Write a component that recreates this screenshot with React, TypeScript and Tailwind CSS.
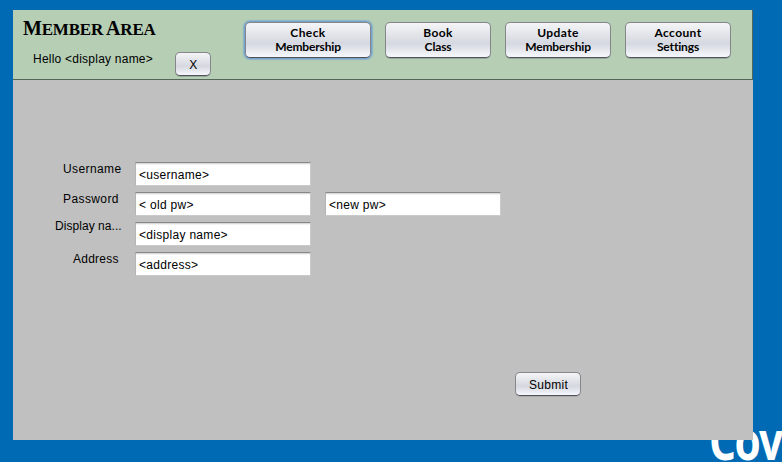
type NavItem = { top: string; bottom: string; width: string; focused?: boolean };

const navItems: NavItem[] = [
  { top: "Check", bottom: "Membership", width: "w-[126px]", focused: true },
  { top: "Book", bottom: "Class", width: "w-[106px]" },
  { top: "Update", bottom: "Membership", width: "w-[106px]" },
  { top: "Account", bottom: "Settings", width: "w-[106px]" },
];

const surface =
  "rounded-[5px] border border-[#85868c] border-b-[#50525a] bg-linear-to-b from-[#f5f5f7] via-[#d5d8e0] via-60% to-[#f6f8fc]";

function NavButton({ item }: { item: NavItem }) {
  return (
    <button
      className={`${surface} ${item.width} flex h-9 flex-col items-center justify-center font-['Lato',sans-serif] text-[12px] leading-[14px] font-bold ${
        item.focused ? "shadow-[0_0_0_1px_#73a4d1,0_0_1px_2px_#73a4d199]" : "shadow-[0_1px_0_#98a99a]"
      }`}
    >
      <span className="tracking-[0.4px]">{item.top}</span>
      <span className="tracking-[-0.15px]">{item.bottom}</span>
    </button>
  );
}

function Field({ value }: { value: string }) {
  return (
    <div className="flex h-6 w-44 items-center border border-t-[#888] border-r-[#cacaca] border-b-[#cacaca] border-l-[#b4b4b4] bg-white pt-px pl-[3px] whitespace-nowrap shadow-[inset_0_1px_0_#d8d8d8,inset_0_2px_0_#f3f3f3]">
      {value}
    </div>
  );
}

const rows = [
  { label: "Username", pad: "pl-[50px] tracking-[0.4px]", values: ["<username>"] },
  { label: "Password", pad: "pl-[50px] tracking-[0.4px]", values: ["< old pw>", "<new pw>"] },
  { label: "Display na...", pad: "pl-[42px] -mt-[3px] tracking-[0.05px]", values: ["<display name>"] },
  { label: "Address", pad: "pl-[60px] tracking-[0.25px]", values: ["<address>"] },
];

export default function App() {
  return (
    <div className="relative h-[462px] w-[782px] overflow-hidden bg-[#006ab5] pt-[10px] pl-[13px] font-['Liberation_Sans',Arial,sans-serif] text-[12px] leading-[14px] tracking-[0.3px] text-black">
      <div className="absolute top-[402px] left-[709px] origin-left scale-x-[0.8] font-['Open_Sans',sans-serif] text-[53px] leading-[76px] font-bold tracking-[-2px] text-white">
        Cove
      </div>
      <main className="relative h-[430px] w-[740px] bg-[#c0c0c0]">
        <header className="flex h-[70px] border-r border-b border-[#56665a] bg-[#b5ceb4]">
          <div className="w-[232px]">
            <h1 className="mt-[6px] ml-[10px] h-[24px] font-['Liberation_Serif',serif] text-[17px] leading-6 font-bold tracking-[-0.2px] whitespace-nowrap [word-spacing:-1px]">
              <span className="text-[20px]">M</span>EMBER <span className="text-[20px]">A</span>REA
            </h1>
            <div className="flex">
              <p className="mt-[12px] ml-5 w-[142px] tracking-[0.23px] whitespace-nowrap">Hello &lt;display name&gt;</p>
              <button className={`${surface} mt-[12px] h-6 w-9 pt-px pl-[1px] shadow-[0_1px_0_#98a99a]`}>X</button>
            </div>
          </div>
          <nav className="mt-3 flex gap-[14px]">
            {navItems.map((item) => (
              <NavButton key={item.top} item={item} />
            ))}
          </nav>
        </header>
        <section className="flex flex-col gap-[6px] pt-[82px]">
          {rows.map((row) => (
            <div key={row.label} className="flex h-6">
              <div className={`${row.pad} w-[122px] shrink-0 whitespace-nowrap`}>{row.label}</div>
              <div className="flex gap-[14px]">
                {row.values.map((v) => (
                  <Field key={v} value={v} />
                ))}
              </div>
            </div>
          ))}
        </section>
        <button className={`${surface} mt-[96px] ml-[502px] h-6 w-[66px] pt-px pl-px shadow-[0_1px_0_#aaa]`}>Submit</button>
      </main>
    </div>
  );
}
